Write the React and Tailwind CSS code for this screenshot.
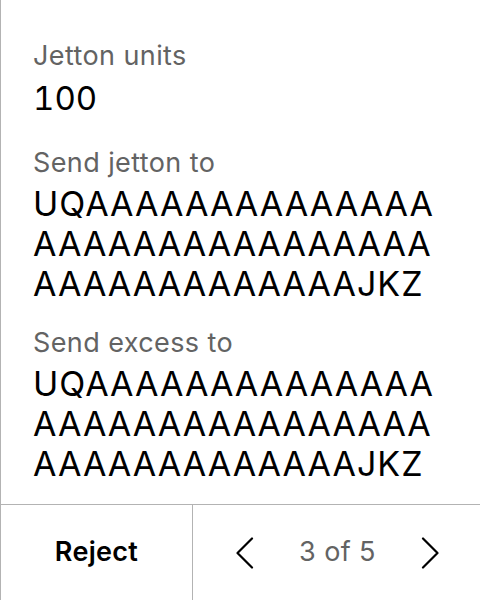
export default function App() {
  const addr = "UQAAAAAAAAAAAAAAAAAAAAAAAAAAAAAAAAAAAAAAAAAAAJKZ";
  return (
    <div
      className="w-[480px] h-[600px] flex flex-col bg-white border-l border-[#b3b3b3] text-black"
      style={{ fontFamily: "Inter, 'Noto Sans', sans-serif" }}
    >
      <div className="flex-1 pl-[32px] pr-[40px] pt-[39px] flex flex-col">
        <div className="text-[27px] leading-[34px] tracking-[0.4px] text-[#636363]">Jetton units</div>
        <div className="mt-[5px] text-[33px] leading-[40px] tabular-nums">100</div>
        <div className="mt-[28px] text-[27px] leading-[34px] tracking-[0.4px] text-[#636363]">Send jetton to</div>
        <div className="mt-[4px] text-[34px] leading-[40px] tracking-[1px] break-all">{addr}</div>
        <div className="mt-[22px] text-[27px] leading-[34px] tracking-[0.4px] text-[#636363]">Send excess to</div>
        <div className="mt-[4px] text-[34px] leading-[40px] tracking-[1px] break-all">{addr}</div>
      </div>
      <div className="h-[96px] border-t border-[#b3b3b3] flex">
        <div className="w-[192px] border-r border-[#b3b3b3] flex items-center justify-center text-[27px] tracking-[0.3px] font-semibold">
          Reject
        </div>
        <div className="flex-1 flex items-center justify-between pl-[42px] pr-[40px]">
          <svg width="20" height="32" viewBox="0 0 20 32" fill="none">
            <polyline points="17,1.5 2.5,16 17,30.5" stroke="black" strokeWidth="2.2" strokeLinecap="round" strokeLinejoin="round" />
          </svg>
          <span className="text-[27px] tracking-[0.4px] text-[#636363]">3 of 5</span>
          <svg width="20" height="32" viewBox="0 0 20 32" fill="none">
            <polyline points="3,1.5 17.5,16 3,30.5" stroke="black" strokeWidth="2.2" strokeLinecap="round" strokeLinejoin="round" />
          </svg>
        </div>
      </div>
    </div>
  );
}
